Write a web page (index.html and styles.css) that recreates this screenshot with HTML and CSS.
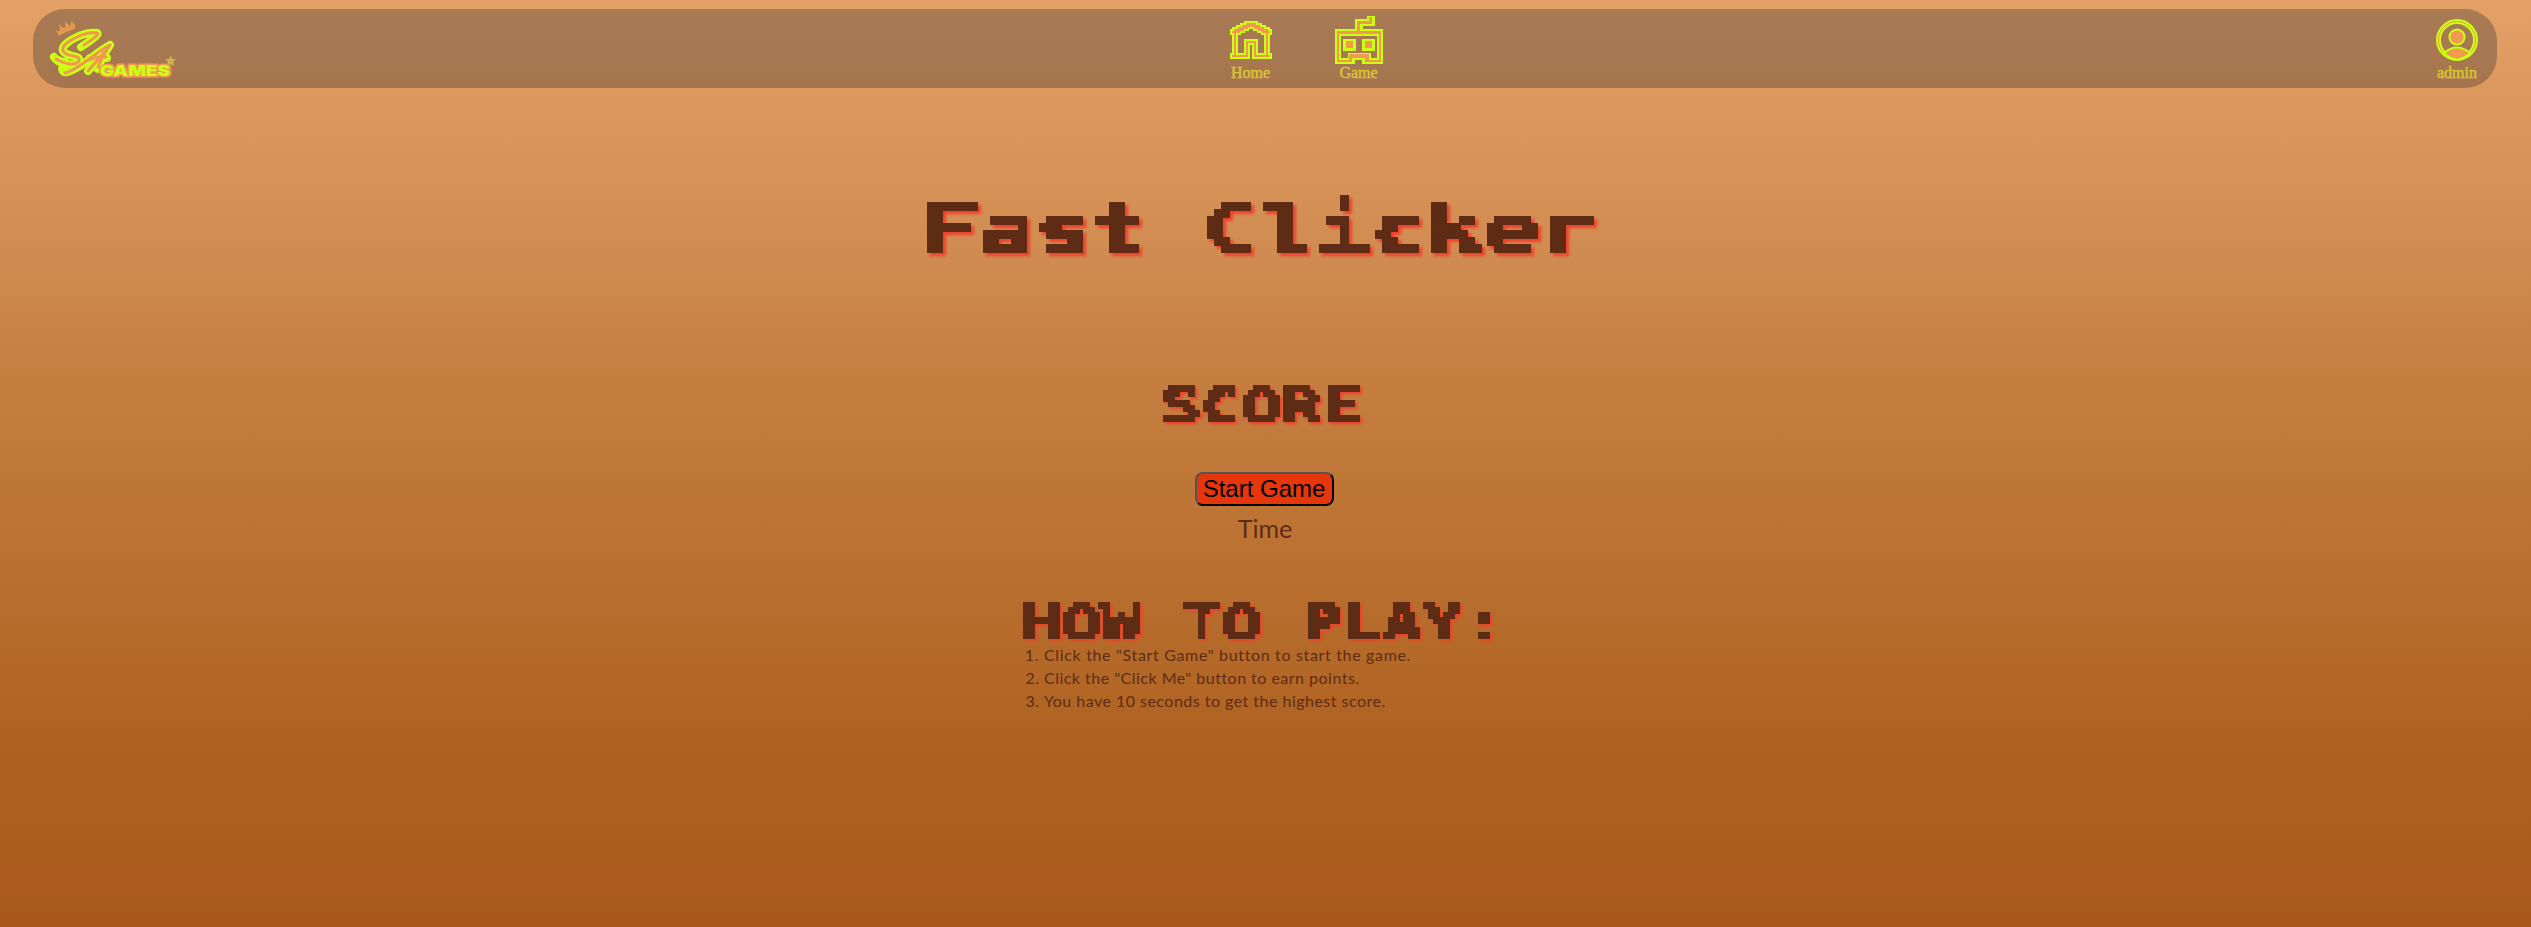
FILE: index.html
```html
<!DOCTYPE html>
<html lang="en">
<head>
<meta charset="utf-8">
<title>Fast Clicker</title>
<link rel="stylesheet" href="styles.css">
</head>
<body>
<svg class="defs" width="0" height="0" aria-hidden="true">
  <filter id="pixel-large" filterUnits="userSpaceOnUse" x="-14" y="-14" width="700" height="112" color-interpolation-filters="sRGB">
    <feFlood x="3" y="3" width="1" height="1" flood-color="#000"/>
    <feComposite x="0" y="0" width="7" height="7"/>
    <feTile result="grid"/>
    <feComposite in="SourceGraphic" in2="grid" operator="in"/>
    <feComponentTransfer><feFuncA type="discrete" tableValues="0 1"/></feComponentTransfer>
    <feMorphology operator="dilate" radius="4"/>
  </filter>
  <filter id="pixel-small" filterUnits="userSpaceOnUse" x="-10" y="-10" width="520" height="80" color-interpolation-filters="sRGB">
    <feFlood x="2" y="2" width="1" height="1" flood-color="#000"/>
    <feComposite x="0" y="0" width="5" height="5"/>
    <feTile result="grid"/>
    <feComposite in="SourceGraphic" in2="grid" operator="in"/>
    <feComponentTransfer><feFuncA type="discrete" tableValues="0 1"/></feComponentTransfer>
    <feMorphology operator="dilate" radius="3"/>
  </filter>
</svg>
<header class="navbar">
  <a class="logo" aria-label="SA Games">
    <svg viewBox="0 0 130 68" width="130" height="68">
      <path class="crown" d="M8 22Q6 16 3 16Q8 17 9 17L8 10Q11 14 14 14L14 7Q17 11 19 12L21 6Q21 10 24 10L24 15Q15 17 8 22Z"/>
      <g class="script-outline"><path d="M30 33Q50 20 46 19C34 17 9 29 12 37C16 44 30 40 28 47C23 53 7 50 3 43M3 43Q8 48 14 48C10 54 10 59 16 58C30 55 43 39 59 31Q48 45 37 57M59 31Q51 43 47 55M39 44H56"/></g>
      <g class="script-inline"><path d="M33 31Q50 20 46 19C34 17 9 29 12 37C16 44 30 40 28 47C23 53 12 49 5 45M14 59C28 56 43 39 59 31Q48 45 37 57M59 31Q51 43 47 53M39 46Q46 42 55 43"/></g>
      <text class="games" x="49" y="62" textLength="70" lengthAdjust="spacingAndGlyphs">GAMES</text>
      <path class="star" d="M120 41l1 4 4 0-3 3 1 4-4-2-3 2 1-4-3-3 4 0z"/>
    </svg>
  </a>
  <nav class="menu">
    <a class="item"><svg viewBox="0 0 42 38" width="42" height="38" shape-rendering="crispEdges">
      <path class="edge" d="M0 8h2V6h4V4h4V2h4V0h14v2h4v2h4v2h4v2h2v6h-2v18h2v6H22V24h-2v14H0v-6h2V14H0z"/>
      <path class="core" d="M2 10h2V8h4V6h4V4h4V2h10v2h4v2h4v2h4v2h2v2h-2v22h2v2H24V20h-6v16H2v-2h2V12H2z"/>
      <path class="edge" d="M6 32V12h4v-2h4V8h4V6h6v2h4v2h4v2h4v22h-10V18H14v16H6z"/>
      <path class="hole" d="M8 32V14h3v-2h4v-2h4V8h4v2h4v2h4v2h3v18h-6V18H14v14z"/>
      <path class="edge" d="M14 18h14v16h-2V20H16v14h-2z"/>
      <path class="core" d="M16 20h10v16h-2V24h-6v12h-2z"/>
      <path class="edge" d="M18 22h6v14h-2V24h-2v12h-2z"/>
      <path class="hole" d="M20 24h2v14h-2z"/>
    </svg><span>Home</span></a>
    <a class="item game"><svg viewBox="0 0 48 48" width="48" height="48" shape-rendering="crispEdges">
      <path class="edge" d="M0 13h20V3h12V0h8v10H28v3h20v35H27v-4h-7v4H0z"/>
      <path class="core" d="M2 15h20V5h12V1h3v7H25v7h21v31H30v-4H17v4H2z"/>
      <path class="edge" d="M4 18h40v26H34v-6H14v6H4z"/>
      <path class="hole" d="M6 20h36v22h-6v-5H13v5H6z"/>
      <path class="edge" d="M8 23h13v12H8zM27 23h13v12H27z"/>
      <path class="core" d="M11 25h7v7h-7zM30 25h7v7h-7z"/>
    </svg><span>Game</span></a>
  </nav>
  <a class="item user"><svg viewBox="0 0 42 42" width="42" height="42">
    <circle class="ring" cx="21" cy="21" r="18.5"/>
    <circle class="ring-core" cx="21" cy="21" r="18.5"/>
    <path class="person" d="M8 34q13-11 26 0-13 13-26 0z"/>
    <circle class="person" cx="21" cy="18" r="7.6"/>
  </svg><span>admin</span></a>
</header>
<main class="page">
  <h1 class="title"><span>Fast Clicker</span></h1>
  <h2 class="score"><span>SCORE</span></h2>
  <button class="start">Start Game</button>
  <p class="time">Time</p>
  <section class="rules">
    <h2 class="rules-title"><span>HOW TO PLAY:</span></h2>
    <ol>
      <li>Click the "Start Game" button to start the game.</li>
      <li>Click the "Click Me" button to earn points.</li>
      <li>You have 10 seconds to get the highest score.</li>
    </ol>
  </section>
</main>
</body>
</html>
```
FILE: styles.css
```css
* { box-sizing: border-box; }
html { height: 100%; }
body {
  margin: 0;
  height: 927px;
  overflow: hidden;
  background: linear-gradient(#e3a067 0%, #cf8b4f 29%, #c98346 35%, #ad611f 82%, #a9591d 100%);
  color: #5e2c14;
  font-family: Lato, sans-serif;
  padding-top: 9px;
}
.defs { display: block; }
.navbar {
  display: grid;
  grid-template-columns: 1fr auto 1fr;
  height: 79px;
  margin: 0 34px 0 33px;
  border-radius: 32px;
  background: linear-gradient(#a87b54, #a6754e);
}
.logo { padding: 5px 0 0 18px; }
.logo svg { display: block; overflow: visible; }
.crown { fill: #e5984f; }
.script-outline { fill: none; stroke: #cf1; stroke-width: 8; stroke-linejoin: round; stroke-linecap: round; }
.script-inline { fill: none; stroke: #f0994f; stroke-width: 3; stroke-linejoin: round; stroke-linecap: round; }
.games { font: 900 15px Inter, sans-serif; fill: #cf1; stroke: #f0994f; stroke-width: 3; paint-order: stroke; }
.star { fill: #c9b54d; }
.menu { display: flex; gap: 63px; margin-left: 82px; }
.item {
  display: flex;
  flex-direction: column;
  align-items: center;
  justify-content: flex-end;
  padding-bottom: 6px;
  color: #d8c532;
  font: 16px/18px "Liberation Serif", serif;
  -webkit-text-stroke: .5px #d8c532;
}
.item svg { display: block; margin-bottom: 5px; }
.item.game svg { margin-bottom: 0; }
.user { justify-self: end; margin-right: 19px; }
.user svg { margin-bottom: 3px; }
.edge { fill: #cf1; }
.core { fill: #f0994f; }
.hole { fill: #a77852; }
.ring { fill: none; stroke: #cf1; stroke-width: 5; }
.ring-core { fill: none; stroke: #f0994f; stroke-width: 1; }
.person { fill: #f0994f; stroke: #cf1; stroke-width: 2; }
.page { display: flex; flex-direction: column; align-items: center; padding-right: 3px; }
h1, h2, p, ol { margin: 0; }
h1, h2 {
  font-family: "DejaVu Sans Mono", monospace;
  font-weight: 700;
}
h1 span, h2 span { display: block; transform: scaleX(1.333); transform-origin: left; white-space: pre; }
.title {
  width: 672px;
  height: 84px;
  margin-top: 101px;
  font-size: 69.8px;
  line-height: 80px;
  filter: url(#pixel-large) drop-shadow(3px 3px 1.5px #f0402c);
}
.title span { margin-left: -5px; }
.score {
  width: 200px;
  height: 60px;
  margin-top: 103px;
  font-size: 50px;
  line-height: 60px;
  filter: url(#pixel-small) drop-shadow(2px 2px 1.5px #f0402c);
}
.score span, .rules-title span { margin-left: -3px; }
.start {
  width: 139px;
  height: 34px;
  margin-top: 36px;
  padding: 0;
  border: 2px outset #000;
  border-radius: 8px;
  background: #e6370c;
  color: #000;
  font: 24px/28px "Liberation Sans", sans-serif;
}
.time { margin-top: 6px; padding-left: 2px; font-size: 25px; line-height: 32px; }
.rules { width: 480px; margin-top: 49px; }
.rules-title {
  height: 50px;
  font-size: 50px;
  line-height: 60px;
  filter: url(#pixel-small) drop-shadow(2px 2px 1.5px #f0402c);
}
ol { padding-left: 20px; font-size: 16px; line-height: 23px; letter-spacing: .66px; }
li + li { letter-spacing: .48px; }
```
